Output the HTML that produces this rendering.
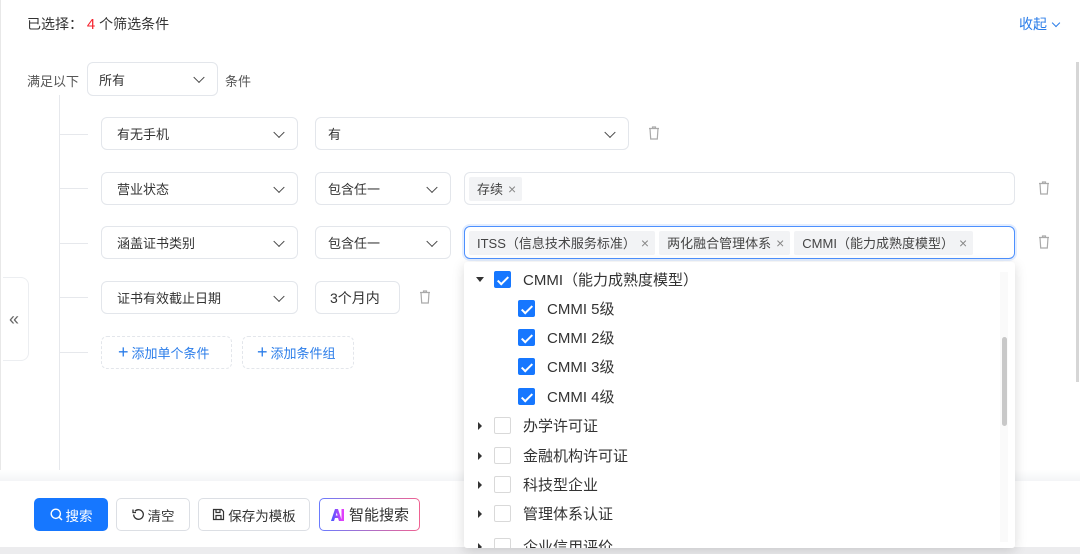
<!DOCTYPE html>
<html><head><meta charset="utf-8"><style>
*{box-sizing:border-box;margin:0;padding:0}
body{width:1080px;height:554px;overflow:hidden;background:#fff;font-family:"Liberation Sans","Noto Sans CJK SC",sans-serif;font-size:13px;color:#333;position:relative}
.a{position:absolute}
.box{position:absolute;border:1px solid #e3e6eb;border-radius:6px;background:#fff;display:flex;align-items:center;padding-left:15px;color:#333;font-size:13px}
.chev{position:absolute;right:14px;top:50%;width:8px;height:8px;border-right:1.6px solid #444;border-bottom:1.6px solid #444;transform:translateY(-70%) rotate(45deg)}
.tag{background:#f2f3f5;height:24px;display:inline-flex;align-items:center;padding:0 6px 0 8px;margin-right:4px;font-size:13px;color:#444;border-radius:2px}
.tag i{font-style:normal;color:#888;margin-left:5px;font-size:14px}
.h{position:absolute;left:60px;width:28px;height:1px;background:#e6e8ec}
.trash{position:absolute;width:12px;height:14px}
.dd{position:absolute;left:464px;top:262px;width:551px;height:286px;background:#fff;box-shadow:0 3px 12px rgba(0,0,0,.15);border-radius:3px;overflow:hidden}
.row{position:absolute;height:29px;display:flex;align-items:center;font-size:15px;color:#333}
.cb{width:17px;height:17px;border-radius:2px;border:1px solid #d9d9d9;background:#fff;display:inline-block;margin-right:12px;position:relative}
.cb.on{background:#1677ff;border-color:#1677ff}
.cb.on:after{content:"";position:absolute;left:5px;top:1.5px;width:4px;height:9px;border-right:2px solid #fff;border-bottom:2px solid #fff;transform:rotate(45deg)}
.tri{width:0;height:0;margin-right:10px}
.tri.r{border-top:4px solid transparent;border-bottom:4px solid transparent;border-left:4px solid #333;margin-left:14px;margin-right:12px}
.tri.d{border-left:4px solid transparent;border-right:4px solid transparent;border-top:5px solid #333;margin-left:12px;margin-right:10px}
.btn{position:absolute;top:498px;height:33px;border:1px solid #dcdfe4;border-radius:5px;background:#fff;display:flex;align-items:center;justify-content:center;font-size:13.5px;color:#333}
</style></head><body>
<div class="a" style="left:0;top:0;width:1px;height:554px;background:#e8e8e8"></div>
<div class="a" style="left:27px;top:14px;font-size:14px;color:#333">已选择： <span style="color:#f5222d;font-size:15px">4</span> 个筛选条件</div>
<div class="a" style="left:1019px;top:14px;font-size:14px;color:#2b7de9">收起 <span style="display:inline-block;width:6px;height:6px;border-right:1.4px solid #2b7de9;border-bottom:1.4px solid #2b7de9;transform:translateY(-3px) rotate(45deg);margin-left:2px"></span></div>
<div class="a" style="left:1076px;top:62px;width:3px;height:320px;background:#d6d6d6"></div>

<div class="a" style="left:27px;top:71px;font-size:13px;color:#555">满足以下</div>
<div class="box" style="left:87px;top:62px;width:131px;height:34px;padding-left:11px">所有<span class="chev"></span></div>
<div class="a" style="left:225px;top:71px;color:#555">条件</div>
<div class="a" style="left:59px;top:95px;width:1px;height:386px;background:#e6e8ec"></div>

<div class="h" style="top:134px"></div>
<div class="box" style="left:101px;top:117px;width:197px;height:33px">有无手机<span class="chev"></span></div>
<div class="box" style="left:315px;top:117px;width:314px;height:33px;padding-left:12px">有<span class="chev"></span></div>
<svg class="trash" style="left:648px;top:126px" viewBox="0 0 12 14"><path d="M1 2.5h10M4.5 2.5V1h3v1.5M2 2.5l.7 10.5h6.6L10 2.5" fill="none" stroke="#aaa" stroke-width="1.2"/></svg>

<div class="h" style="top:188px"></div>
<div class="box" style="left:101px;top:172px;width:197px;height:33px">营业状态<span class="chev"></span></div>
<div class="box" style="left:315px;top:172px;width:136px;height:33px;padding-left:12px">包含任一<span class="chev"></span></div>
<div class="box" style="left:464px;top:172px;width:551px;height:33px;padding-left:4px"><span class="tag">存续<i>×</i></span></div>
<svg class="trash" style="left:1038px;top:181px" viewBox="0 0 12 14"><path d="M1 2.5h10M4.5 2.5V1h3v1.5M2 2.5l.7 10.5h6.6L10 2.5" fill="none" stroke="#aaa" stroke-width="1.2"/></svg>

<div class="h" style="top:243px"></div>
<div class="box" style="left:101px;top:226px;width:197px;height:33px">涵盖证书类别<span class="chev"></span></div>
<div class="box" style="left:315px;top:226px;width:136px;height:33px;padding-left:12px">包含任一<span class="chev"></span></div>
<div class="box" style="left:464px;top:226px;width:551px;height:33px;padding-left:4px;border-color:#4d90fe;box-shadow:0 0 0 2px rgba(77,144,254,.15)"><span class="tag">ITSS（信息技术服务标准）<i>×</i></span><span class="tag">两化融合管理体系<i>×</i></span><span class="tag">CMMI（能力成熟度模型）<i>×</i></span></div>
<svg class="trash" style="left:1038px;top:235px" viewBox="0 0 12 14"><path d="M1 2.5h10M4.5 2.5V1h3v1.5M2 2.5l.7 10.5h6.6L10 2.5" fill="none" stroke="#aaa" stroke-width="1.2"/></svg>

<div class="h" style="top:297px"></div>
<div class="box" style="left:101px;top:281px;width:197px;height:33px">证书有效截止日期<span class="chev"></span></div>
<div class="box" style="left:315px;top:281px;width:85px;height:33px;padding-left:14px;font-size:14px">3个月内</div>
<svg class="trash" style="left:419px;top:290px" viewBox="0 0 12 14"><path d="M1 2.5h10M4.5 2.5V1h3v1.5M2 2.5l.7 10.5h6.6L10 2.5" fill="none" stroke="#aaa" stroke-width="1.2"/></svg>

<div class="h" style="top:352px"></div>
<div class="box" style="left:101px;top:336px;width:131px;height:33px;border:1px dashed #e3e6eb;color:#2b7de9;padding-left:16px"><b style="font-size:18px;font-weight:400;margin-right:3px">+</b>添加单个条件</div>
<div class="box" style="left:242px;top:336px;width:112px;height:33px;border:1px dashed #e3e6eb;color:#2b7de9;padding-left:14px"><b style="font-size:18px;font-weight:400;margin-right:3px">+</b>添加条件组</div>

<div class="a" style="left:3px;top:277px;width:26px;height:84px;border:1px solid #eceef1;border-left:none;border-radius:0 8px 8px 0;background:#fff;color:#666;font-size:18px;display:flex;align-items:center;justify-content:center;padding-right:3px">«</div>

<div class="a" style="left:0;top:470px;width:1080px;height:12px;background:linear-gradient(#fff,#f3f4f6)"></div>
<div class="a" style="left:0;top:481px;width:1080px;height:66px;background:#fff"></div>
<div class="a" style="left:0;top:547px;width:1080px;height:7px;background:#ececee"></div>
<div class="btn" style="left:34px;width:74px;background:#1677ff;border-color:#1677ff;color:#fff"><svg width="13" height="13" viewBox="0 0 13 13" style="margin-right:3px"><circle cx="5.8" cy="5.8" r="4.6" fill="none" stroke="#fff" stroke-width="1.4"/><path d="M9.2 9.2l2.8 2.8" stroke="#fff" stroke-width="1.4"/></svg>搜索</div>
<div class="btn" style="left:116px;width:74px"><svg width="13" height="13" viewBox="0 0 13 13" style="margin-right:3px"><path d="M3 3.2A4.8 4.8 0 1 1 1.7 6.5" fill="none" stroke="#333" stroke-width="1.3"/><path d="M1 1.5v3h3" fill="none" stroke="#333" stroke-width="1.3"/></svg>清空</div>
<div class="btn" style="left:198px;width:112px"><svg width="13" height="13" viewBox="0 0 13 13" style="margin-right:3px"><path d="M1.5 1.5h8l2 2v8h-10z M4 1.5v3h4v-3 M4 11.5v-4h5v4" fill="none" stroke="#333" stroke-width="1.2"/></svg>保存为模板</div>
<div class="btn" style="left:319px;width:101px;border:1.5px solid transparent;background:linear-gradient(#fff,#fff) padding-box,linear-gradient(90deg,#6a7bff,#f06292) border-box;font-size:15px"><svg width="15" height="14" viewBox="0 0 15 14" style="margin-right:4px"><defs><linearGradient id="g" x1="0" x2="1"><stop offset="0" stop-color="#3d5afe"/><stop offset="1" stop-color="#e040fb"/></linearGradient></defs><path d="M1 13L5 1h3l4 12h-3l-1-3H5l-1 3z M5.8 7.5h1.8L6.7 4.5z" fill="url(#g)" fill-rule="evenodd"/><rect x="11.5" y="1" width="2.5" height="12" fill="#e040fb"/></svg>智能搜索</div>

<div class="dd">
  <div class="row" style="top:3px;left:0"><span class="tri d"></span><span class="cb on"></span>CMMI（能力成熟度模型）</div>
  <div class="row" style="top:32px;left:54px"><span class="cb on"></span>CMMI 5级</div>
  <div class="row" style="top:61px;left:54px"><span class="cb on"></span>CMMI 2级</div>
  <div class="row" style="top:90px;left:54px"><span class="cb on"></span>CMMI 3级</div>
  <div class="row" style="top:120px;left:54px"><span class="cb on"></span>CMMI 4级</div>
  <div class="row" style="top:149px;left:0"><span class="tri r"></span><span class="cb"></span>办学许可证</div>
  <div class="row" style="top:179px;left:0"><span class="tri r"></span><span class="cb"></span>金融机构许可证</div>
  <div class="row" style="top:208px;left:0"><span class="tri r"></span><span class="cb"></span>科技型企业</div>
  <div class="row" style="top:237px;left:0"><span class="tri r"></span><span class="cb"></span>管理体系认证</div>
  <div class="row" style="top:270px;left:0"><span class="tri r"></span><span class="cb"></span>企业信用评价</div>
  <div class="a" style="left:536px;top:10px;width:8px;height:270px;background:#fafafa"></div>
  <div class="a" style="left:538px;top:75px;width:5px;height:89px;background:#c8c8c8;border-radius:3px"></div>
</div>
</body></html>
